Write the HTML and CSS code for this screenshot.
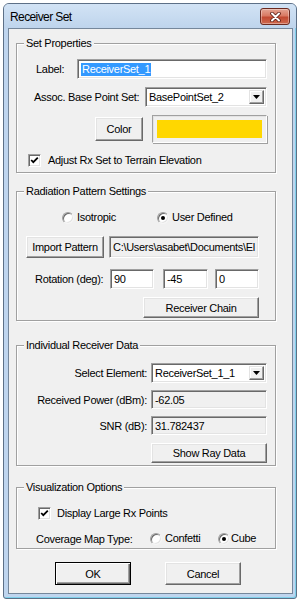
FILE: index.html
```html
<!DOCTYPE html>
<html>
<head>
<meta charset="utf-8">
<link rel="stylesheet" href="styles.css">
</head>
<body>
<div class="window">
  <div class="titlebar">
    <span class="title">Receiver Set</span>
    <span class="close">
      <svg width="13" height="10" viewBox="0 0 13 10"><path d="M3 1.5 L10 8.5 M10 1.5 L3 8.5" stroke="#5a1d14" stroke-width="3.6" stroke-linecap="round"/><path d="M3 1.5 L10 8.5 M10 1.5 L3 8.5" stroke="#fff" stroke-width="2" stroke-linecap="round"/></svg>
    </span>
  </div>
  <div class="client">
    <fieldset class="group g1">
      <legend>Set Properties</legend>
      <div class="row r-label">
        <span class="lbl w-label">Label:</span>
        <span class="field w-labelinput"><span class="sel">ReceiverSet_1</span></span>
      </div>
      <div class="row r-assoc">
        <span class="lbl w-assoc">Assoc. Base Point Set:</span>
        <span class="field combo w-assocsel"><span class="ctext">BasePointSet_2</span><span class="dd"><svg width="7" height="4" viewBox="0 0 7 4"><polygon points="0,0 7,0 3.5,4" fill="#000"/></svg></span></span>
      </div>
      <div class="row r-color">
        <span class="btn w-color">Color</span>
        <span class="swatch"><span class="swatch-fill"></span></span>
      </div>
      <div class="row r-check1">
        <span class="check"><svg width="11" height="11" viewBox="0 0 11 11"><polyline points="2.2,5 4.3,7.2 8.8,2.6" fill="none" stroke="#000" stroke-width="1.8"/></svg></span>
        <span class="chktext">Adjust Rx Set to Terrain Elevation</span>
      </div>
    </fieldset>

    <fieldset class="group g2">
      <legend>Radiation Pattern Settings</legend>
      <div class="row r-radio">
        <span class="ropt w-iso"><span class="radio"></span><span class="rtext">Isotropic</span></span>
        <span class="ropt"><span class="radio on"></span><span class="rtext">User Defined</span></span>
      </div>
      <div class="row r-import">
        <span class="btn w-import">Import Pattern</span>
        <span class="field ro w-path">C:\Users\asabet\Documents\El</span>
      </div>
      <div class="row r-rot">
        <span class="lbl w-rot">Rotation (deg):</span>
        <span class="field w-r1">90</span>
        <span class="field w-r2">-45</span>
        <span class="field w-r3">0</span>
      </div>
      <div class="row r-chain">
        <span class="btn w-chain">Receiver Chain</span>
      </div>
    </fieldset>

    <fieldset class="group g3">
      <legend>Individual Receiver Data</legend>
      <div class="row r-sel">
        <span class="lbl rlbl">Select Element:</span>
        <span class="field combo w-data"><span class="ctext">ReceiverSet_1_1</span><span class="dd"><svg width="7" height="4" viewBox="0 0 7 4"><polygon points="0,0 7,0 3.5,4" fill="#000"/></svg></span></span>
      </div>
      <div class="row r-pow">
        <span class="lbl rlbl">Received Power (dBm):</span>
        <span class="field ro w-data">-62.05</span>
      </div>
      <div class="row r-snr">
        <span class="lbl rlbl">SNR (dB):</span>
        <span class="field ro w-data">31.782437</span>
      </div>
      <div class="row r-ray">
        <span class="btn w-ray">Show Ray Data</span>
      </div>
    </fieldset>

    <fieldset class="group g4">
      <legend>Visualization Options</legend>
      <div class="row r-check2">
        <span class="check"><svg width="11" height="11" viewBox="0 0 11 11"><polyline points="2.2,5 4.3,7.2 8.8,2.6" fill="none" stroke="#000" stroke-width="1.8"/></svg></span>
        <span class="chktext2">Display Large Rx Points</span>
      </div>
      <div class="row r-cov">
        <span class="lbl w-cov">Coverage Map Type:</span>
        <span class="ropt w-conf"><span class="radio"></span><span class="rtext">Confetti</span></span>
        <span class="ropt"><span class="radio on"></span><span class="rtext2">Cube</span></span>
      </div>
    </fieldset>

    <div class="row r-buttons">
      <span class="btn default w-ok">OK</span>
      <span class="btn w-cancel">Cancel</span>
    </div>
  </div>
</div>
</body>
</html>
```

FILE: styles.css
```css
html, body {
  margin: 0;
  padding: 0;
  background: #ffffff;
}
body {
  width: 300px;
  height: 600px;
  overflow: hidden;
  font-family: "Liberation Sans", Arial, sans-serif;
  font-size: 11px;
  letter-spacing: -0.3px;
  color: #000;
}
.window {
  box-sizing: border-box;
  margin: 3px 0 0 3px;
  width: 294px;
  height: 596px;
  border: 1px solid #5d7087;
  border-radius: 6px 6px 3px 3px;
  background: #bfd5ee;
  display: flex;
  flex-direction: column;
  padding: 0 3px 4px 4px;
  box-shadow: inset -1px -1px 0 #7fd0ea;
}
.titlebar {
  height: 24px;
  flex: none;
  display: flex;
  align-items: flex-start;
  justify-content: space-between;
  margin: 0 -3px 0 -4px;
  padding: 0 6px 0 6px;
  background: linear-gradient(#d2e3f5, #bed4ec);
  border-radius: 5px 5px 0 0;
}
.title {
  font-size: 12px;
  letter-spacing: -0.6px;
  line-height: 14px;
  margin-top: 6px;
  color: #000;
}
.close {
  box-sizing: border-box;
  width: 30px;
  height: 17px;
  margin-top: 4px;
  border: 1px solid #6b2a20;
  border-radius: 3px;
  background: linear-gradient(#e4a493 0%, #d97a63 45%, #c24a32 55%, #cf6a4f 100%);
  box-shadow: inset 0 0 0 1px rgba(255,255,255,0.35);
  display: flex;
  align-items: center;
  justify-content: center;
}
.close svg { display: block; }
.client {
  box-sizing: border-box;
  flex: 1;
  background: #f0f0f0;
  border: 1px solid #75879b;
  padding: 8px 0 0 7px;
  display: flex;
  flex-direction: column;
  align-items: flex-start;
}
.group {
  box-sizing: border-box;
  width: 260px;
  margin: 0;
  padding: 0;
  min-inline-size: 0;
  border: 1px solid #a0a0a0;
  box-shadow: 1px 1px 0 #fff, inset 1px 1px 0 #fff;
  display: flex;
  flex-direction: column;
}
.group legend {
  margin-left: 7px;
  padding: 0 2px;
  line-height: 13px;
  height: 13px;
  background: #f0f0f0;
}
.g1 { padding-bottom: 5px; }
.g2 { margin-top: 12px; padding-bottom: 2px; }
.g3 { margin-top: 18px; padding-bottom: 2px; }
.g4 { margin-top: 15px; padding-bottom: 3px; }

.row {
  display: flex;
  align-items: center;
  flex: none;
}
.lbl { white-space: nowrap; flex: none; }

/* sunken field */
.field {
  box-sizing: border-box;
  flex: none;
  background: #fff;
  border: 1px solid;
  border-color: #a0a0a0 #fff #fff #a0a0a0;
  box-shadow: inset 1px 1px 0 #696969, inset -1px -1px 0 #e3e3e3;
  white-space: nowrap;
  overflow: hidden;
  padding-left: 3px;
  display: flex;
  align-items: center;
}
.field.ro { background: #f0f0f0; }

/* raised button */
.btn {
  box-sizing: border-box;
  flex: none;
  background: #f0f0f0;
  border: 1px solid;
  border-color: #fff #696969 #696969 #fff;
  box-shadow: inset -1px -1px 0 #a0a0a0, inset 1px 1px 0 #e3e3e3;
  display: flex;
  align-items: center;
  justify-content: center;
  white-space: nowrap;
}
.btn.default {
  border-color: #000;
  box-shadow: inset 1px 1px 0 #fff, inset -1px -1px 0 #696969, inset -2px -2px 0 #a0a0a0;
}

/* group 1 */
.r-label { margin-top: 9px; margin-left: 19px; height: 20px; }
.w-label { width: 41px; }
.w-labelinput { width: 190px; height: 20px; padding-left: 3px; }
.sel {
  background: #3399ff;
  color: #fff;
  line-height: 13px;
  padding: 0 1px;
}
.r-assoc { margin-top: 8px; margin-left: 17px; height: 20px; }
.w-assoc { width: 111px; }
.w-assocsel { width: 122px; height: 20px; }
.combo {
  padding: 2px 2px 2px 3px;
  align-items: stretch;
}
.ctext {
  flex: 1;
  display: flex;
  align-items: center;
  overflow: hidden;
}
.dd {
  box-sizing: border-box;
  width: 15px;
  flex: none;
  background: #f0f0f0;
  border: 1px solid;
  border-color: #e3e3e3 #696969 #696969 #e3e3e3;
  box-shadow: inset -1px -1px 0 #a0a0a0, inset 1px 1px 0 #fff;
  display: flex;
  align-items: center;
  justify-content: center;
}
.dd svg { display: block; }
.r-color { margin-top: 8px; height: 28px; margin-left: 78px; }
.w-color { width: 48px; height: 24px; }
.swatch {
  box-sizing: border-box;
  margin-left: 9px;
  width: 115px;
  height: 28px;
  border: 1px solid;
  border-color: #a0a0a0 #fff #fff #a0a0a0;
  box-shadow: inset 1px 1px 0 #e3e3e3, 1px 1px 0 #a0a0a0;
  padding: 4px;
  display: flex;
}
.swatch-fill { flex: 1; background: #ffd700; }
.r-check1 { margin-top: 11px; margin-left: 11px; height: 13px; }
.check {
  box-sizing: border-box;
  width: 13px;
  height: 13px;
  flex: none;
  background: #fff;
  border: 1px solid;
  border-color: #a0a0a0 #fff #fff #a0a0a0;
  box-shadow: inset 1px 1px 0 #696969, inset -1px -1px 0 #e3e3e3;
  display: flex;
  align-items: center;
  justify-content: center;
}
.check svg { display: block; }
.chktext { margin-left: 7px; line-height: 13px; white-space: nowrap; }
.chktext2 { margin-left: 6px; line-height: 13px; white-space: nowrap; }

/* group 2 */
.r-radio { margin-top: 13px; margin-left: 45px; height: 13px; }
.ropt { display: flex; align-items: center; flex: none; white-space: nowrap; }
.w-iso { width: 95px; }
.radio {
  position: relative;
  box-sizing: border-box;
  width: 12px;
  height: 12px;
  flex: none;
  border-radius: 50%;
  background: #fff;
  border: 1px solid;
  border-color: #a0a0a0 #f4f4f4 #f4f4f4 #a0a0a0;
  box-shadow: inset 1px 1px 0 #696969, inset -1px -1px 0 #e3e3e3;
}
.radio.on::after {
  content: "";
  position: absolute;
  left: 3px;
  top: 3px;
  width: 4px;
  height: 4px;
  border-radius: 50%;
  background: #000;
}
.rtext { margin-left: 3px; line-height: 13px; }
.rtext2 { margin-left: 1px; line-height: 13px; }
.r-import { margin-top: 12px; margin-left: 9px; height: 22px; }
.w-import { width: 78px; height: 22px; }
.w-path { margin-left: 5px; width: 150px; height: 22px; }
.r-rot { margin-top: 11px; margin-left: 18px; height: 20px; }
.w-rot { width: 75px; }
.w-r1 { width: 44px; height: 20px; }
.w-r2 { width: 45px; height: 20px; margin-left: 9px; }
.w-r3 { width: 44px; height: 20px; margin-left: 7px; }
.r-chain { margin-top: 8px; margin-left: 126px; }
.w-chain { width: 116px; height: 21px; }

/* group 3 */
.rlbl { width: 130px; text-align: right; }
.w-data { margin-left: 4px; width: 116px; }
.r-sel { margin-top: 11px; }
.r-sel .w-data { height: 20px; }
.r-pow { margin-top: 7px; }
.r-pow .w-data { height: 19px; }
.r-snr { margin-top: 7px; }
.r-snr .w-data { height: 19px; }
.r-ray { margin-top: 8px; margin-left: 134px; }
.w-ray { width: 116px; height: 20px; }

/* group 4 */
.r-check2 { margin-top: 13px; margin-left: 21px; height: 13px; }
.r-cov { margin-top: 12px; margin-left: 19px; height: 13px; }
.w-cov { width: 114px; }
.w-conf { width: 68px; }

/* dialog buttons */
.r-buttons { margin-top: 13px; margin-left: 39px; }
.w-ok { width: 76px; height: 23px; }
.w-cancel { width: 76px; height: 23px; margin-left: 34px; }
```
